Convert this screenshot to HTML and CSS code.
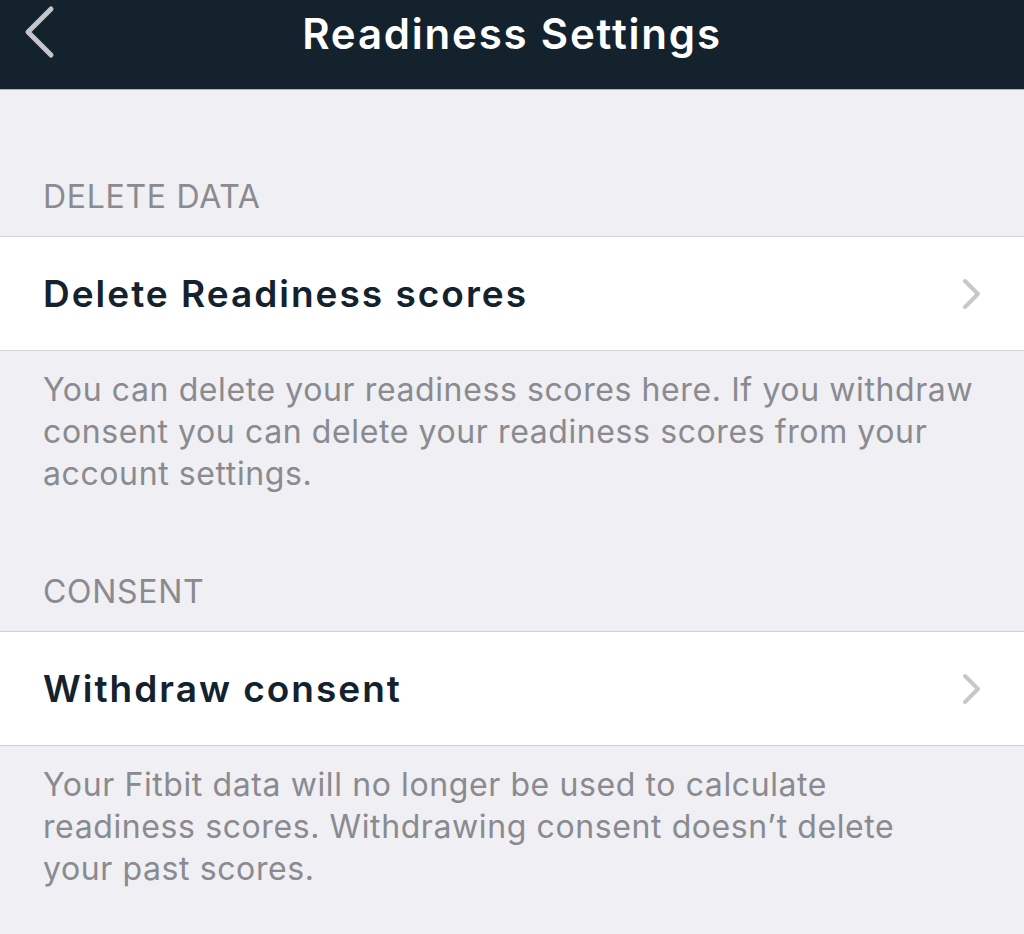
FILE: index.html
```html
<!DOCTYPE html>
<html lang="en">
<head>
    <meta charset="UTF-8">
    <meta name="viewport" content="width=device-width, initial-scale=1.0">
    <title>Readiness Settings</title>
    <link rel="stylesheet" href="styles.css">
</head>
<body>
    <header class="nav-bar">
        <a class="back-button" href="#" aria-label="Back">
            <svg width="36" height="56" viewBox="0 0 36 56">
                <polyline points="29,5 6,28 29,51" fill="none" stroke="#c4c6c9" stroke-width="5" stroke-linecap="round" stroke-linejoin="round"/>
            </svg>
        </a>
        <h1>Readiness Settings</h1>
    </header>

    <main class="settings">
        <section class="group group-first">
            <h2 class="group-title">DELETE DATA</h2>
            <a class="row" href="#">
                <span class="row-label">Delete Readiness scores</span>
                <svg class="chevron" width="22" height="34" viewBox="0 0 22 34">
                    <polyline points="5,4 18,17 5,30" fill="none" stroke="#c7c7cc" stroke-width="4" stroke-linecap="round" stroke-linejoin="round"/>
                </svg>
            </a>
            <p class="group-footer">
                You can delete your readiness scores here. If you withdraw consent you can delete your readiness scores from your account settings.
            </p>
        </section>

        <section class="group">
            <h2 class="group-title">CONSENT</h2>
            <a class="row" href="#">
                <span class="row-label">Withdraw consent</span>
                <svg class="chevron" width="22" height="34" viewBox="0 0 22 34">
                    <polyline points="5,4 18,17 5,30" fill="none" stroke="#c7c7cc" stroke-width="4" stroke-linecap="round" stroke-linejoin="round"/>
                </svg>
            </a>
            <p class="group-footer">
                Your Fitbit data will no longer be used to calculate readiness scores. Withdrawing consent doesn’t delete your&nbsp;past scores.
            </p>
        </section>
    </main>
</body>
</html>
```

FILE: styles.css
```css
body {
    margin: 0;
    font-family: Inter, 'Noto Sans', sans-serif;
    background-color: #efeff4;
    color: #14222e;
}

.nav-bar {
    position: relative;
    height: 89px;
    background-color: #14222e;
    display: flex;
    align-items: center;
    justify-content: center;
    border-bottom: 1px solid #a9b4bc;
}

.back-button {
    position: absolute;
    left: 22px;
    top: 4px;
    display: block;
}

.nav-bar h1 {
    margin: 0 0 22px 0;
    color: #ffffff;
    font-size: 42px;
    font-weight: 600;
    letter-spacing: 1.8px;
}

.settings {
    padding-bottom: 40px;
}

.group {
    padding-top: 76px;
}

.group-first {
    padding-top: 86px;
}

.group-title {
    margin: 0;
    padding: 0 43px 19px;
    font-size: 32px;
    line-height: 41px;
    font-weight: 400;
    letter-spacing: 0.7px;
    color: #8a8a8f;
}

.row {
    display: flex;
    align-items: center;
    justify-content: space-between;
    height: 113px;
    padding: 0 42px 0 43px;
    background-color: #ffffff;
    border-top: 1px solid #d0d0d5;
    border-bottom: 1px solid #d0d0d5;
    text-decoration: none;
    color: #14222e;
}

.row-label {
    font-size: 37px;
    font-weight: 600;
    letter-spacing: 2px;
}

.chevron {
    display: block;
}

.group-footer {
    margin: 0;
    padding: 18px 43px 0;
    font-size: 32px;
    line-height: 42px;
    letter-spacing: 0.6px;
    color: #8a8a8f;
}
```
